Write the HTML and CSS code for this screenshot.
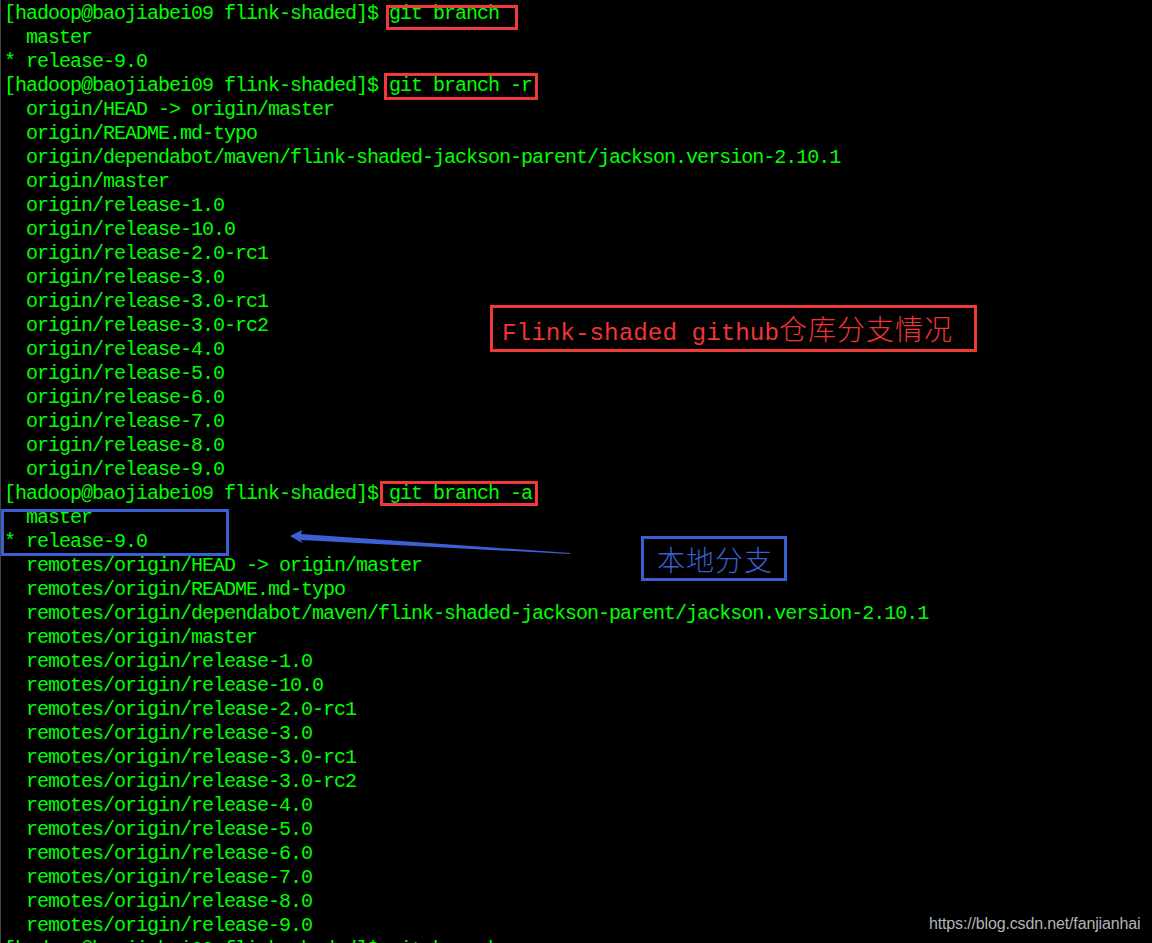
FILE: index.html
```html
<!DOCTYPE html>
<html lang="zh-CN">
<head>
  <meta charset="UTF-8" />
  <title>flink-shaded git branch</title>
  <link rel="stylesheet" href="styles.css">
</head>
<body>
  <div class="terminal">
<pre class="output">[hadoop@baojiabei09 flink-shaded]$ git branch
  master
* release-9.0
[hadoop@baojiabei09 flink-shaded]$ git branch -r
  origin/HEAD -&gt; origin/master
  origin/README.md-typo
  origin/dependabot/maven/flink-shaded-jackson-parent/jackson.version-2.10.1
  origin/master
  origin/release-1.0
  origin/release-10.0
  origin/release-2.0-rc1
  origin/release-3.0
  origin/release-3.0-rc1
  origin/release-3.0-rc2
  origin/release-4.0
  origin/release-5.0
  origin/release-6.0
  origin/release-7.0
  origin/release-8.0
  origin/release-9.0
[hadoop@baojiabei09 flink-shaded]$ git branch -a
  master
* release-9.0
  remotes/origin/HEAD -&gt; origin/master
  remotes/origin/README.md-typo
  remotes/origin/dependabot/maven/flink-shaded-jackson-parent/jackson.version-2.10.1
  remotes/origin/master
  remotes/origin/release-1.0
  remotes/origin/release-10.0
  remotes/origin/release-2.0-rc1
  remotes/origin/release-3.0
  remotes/origin/release-3.0-rc1
  remotes/origin/release-3.0-rc2
  remotes/origin/release-4.0
  remotes/origin/release-5.0
  remotes/origin/release-6.0
  remotes/origin/release-7.0
  remotes/origin/release-8.0
  remotes/origin/release-9.0
[hadoop@baojiabei09 flink-shaded]$ git branch -a</pre>

    <!-- annotations drawn on top of the screenshot -->
    <div class="mark red cmd-1"></div>
    <div class="mark red cmd-2"></div>
    <div class="mark red cmd-3"></div>
    <div class="mark blue local"></div>

    <div class="label red-label">Flink-shaded github<span class="cjk">仓库分支情况</span></div>
    <div class="label blue-label"><span class="cjk">本地分支</span></div>

    <svg class="arrow" width="300" height="40" viewBox="0 0 300 40">
      <polygon points="0,14 12,8 11,12 280,31 280,32 11,18 12,21" fill="#3d5fd6" />
    </svg>

    <div class="watermark">https://blog.csdn.net/fanjianhai</div>
  </div>
</body>
</html>
```

FILE: styles.css
```css
html, body {
  margin: 0;
  padding: 0;
  background: #000;
}

.terminal {
  position: relative;
  width: 1152px;
  height: 943px;
  overflow: hidden;
  background: #000;
  border-left: 1px solid #444;
  box-sizing: border-box;
}

.output {
  margin: 0;
  padding: 2px 0 0 3px;
  font-family: "Liberation Mono", "DejaVu Sans Mono", monospace;
  font-size: 20px;
  letter-spacing: -1px;
  line-height: 24px;
  color: #00ff00;
}

.mark {
  position: absolute;
  box-sizing: border-box;
}

.red { border: 3px solid #f03a3a; }
.blue { border: 3px solid #3a5fd0; }

.cmd-1 { left: 385px; top: 5px; width: 132px; height: 25px; }
.cmd-2 { left: 383px; top: 73px; width: 154px; height: 27px; }
.cmd-3 { left: 379px; top: 481px; width: 158px; height: 25px; }
.local { left: 0; top: 509px; width: 228px; height: 47px; }

.label {
  position: absolute;
  box-sizing: border-box;
  font-family: "Liberation Mono", monospace;
  white-space: nowrap;
}

.cjk {
  font-family: "Noto Sans CJK SC", sans-serif;
  font-weight: 300;
  font-size: 28px;
  letter-spacing: 1px;
}

.red-label {
  left: 489px;
  top: 305px;
  width: 487px;
  height: 47px;
  padding: 4px 0 0 9px;
  border: 3px solid #f03a3a;
  color: #ef3535;
  font-size: 24.3px;
  line-height: 32px;
}

.blue-label {
  left: 640px;
  top: 536px;
  width: 146px;
  height: 45px;
  padding: 3px 0 0 13px;
  border: 3px solid #3a5fd0;
  color: #3a5fd0;
  line-height: 34px;
}

.arrow {
  position: absolute;
  left: 289px;
  top: 522px;
}

.watermark {
  position: absolute;
  left: 928px;
  top: 915px;
  font-family: "Liberation Sans", Arial, sans-serif;
  font-size: 16px;
  letter-spacing: -0.15px;
  color: #b4b4b4;
}
```
